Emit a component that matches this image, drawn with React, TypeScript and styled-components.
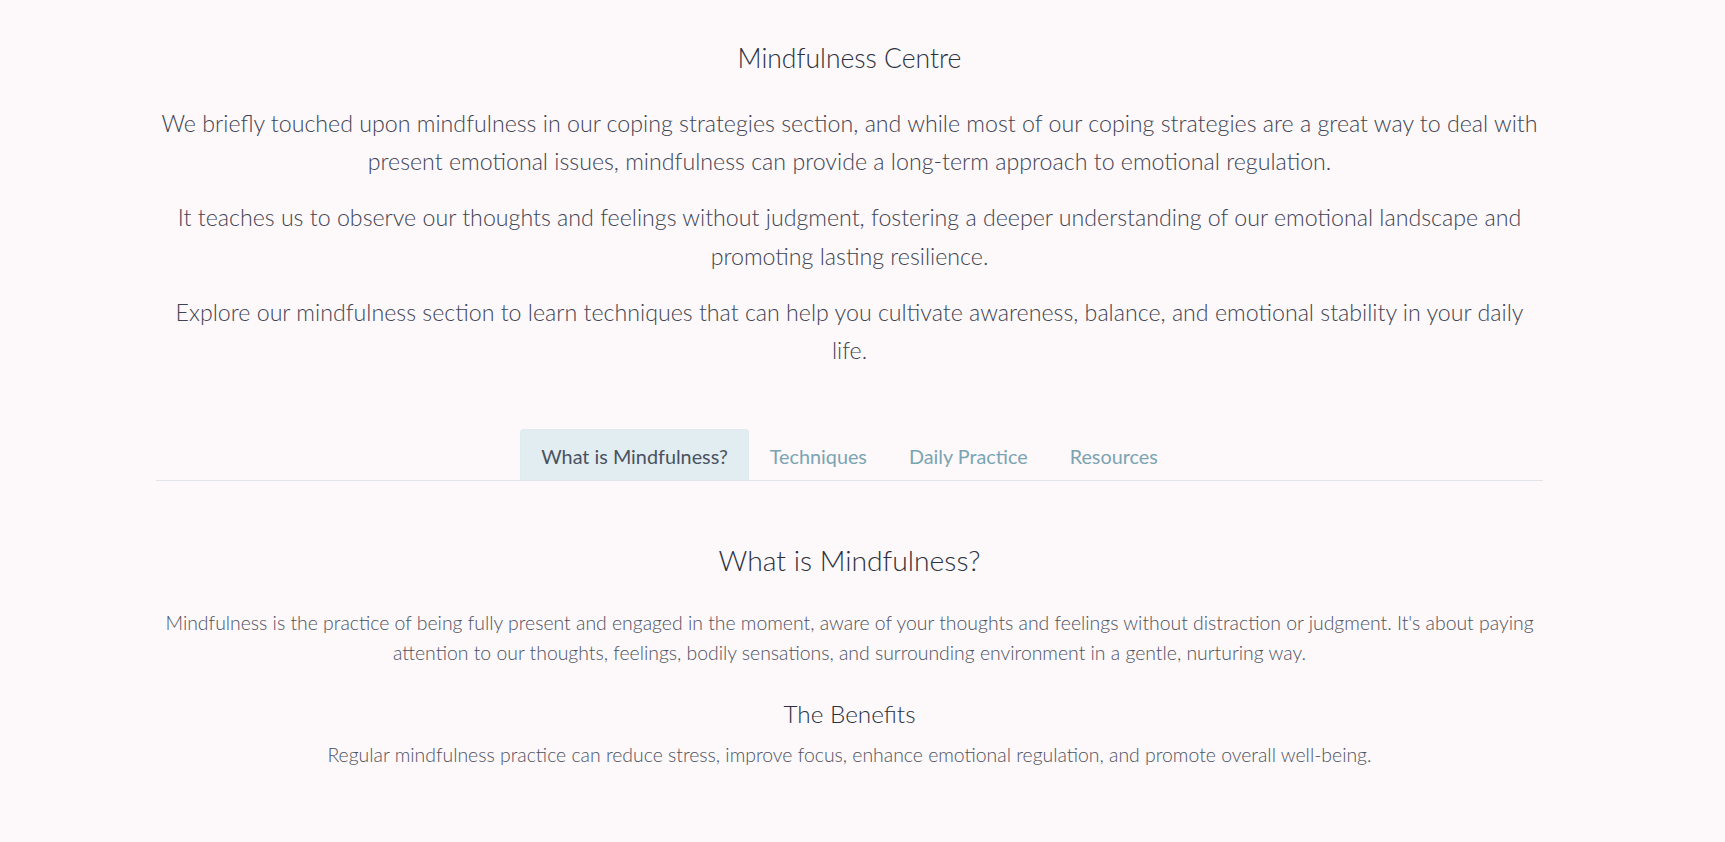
import React, { useState } from "react";
import styled, { createGlobalStyle } from "styled-components";

const GlobalStyle = createGlobalStyle`
  html, body { margin: 0; padding: 0; background: #fdf8fa; }
  body { font-family: Lato, "Open Sans", sans-serif; font-weight: 300; color: #3f4654; }
  * { box-sizing: border-box; }
`;

const Page = styled.main`
  padding: 42px 182px 60px 156px;
  min-height: 842px;
`;

const Title = styled.h1`
  margin: 0 0 30px;
  font-size: 26.5px;
  line-height: 32px;
  font-weight: 300;
  text-align: center;
  color: #2a3240;
`;

const Lead = styled.p`
  margin: 0 0 17.6px;
  font-size: 23.2px;
  line-height: 38.4px;
  text-align: center;
  color: #3e4452;
`;

const TabBar = styled.nav`
  display: flex;
  justify-content: center;
  margin-top: 58px;
  border-bottom: 1px solid #e1e4e8;
`;

const Tab = styled.button<{ $active?: boolean }>`
  appearance: none;
  border: 1px solid ${(p) => (p.$active ? "#e0e9ee" : "transparent")};
  border-bottom: none;
  border-radius: 4px 4px 0 0;
  background: ${(p) => (p.$active ? "#e1edf1" : "transparent")};
  color: ${(p) => (p.$active ? "#4a5260" : "#7ba4b3")};
  font-family: Lato, "Open Sans", sans-serif;
  font-weight: 400;
  font-size: 19.8px;
  height: 51px;
  line-height: 48px;
  padding: 2px 20px 0;
  margin-top: 1px;
  cursor: pointer;
`;

const Panel = styled.section`
  padding-top: 62px;
  text-align: center;
`;

const SectionTitle = styled.h2`
  margin: 0 0 31px;
  font-size: 28.3px;
  line-height: 34px;
  font-weight: 300;
  color: #2a3240;
`;

const SubTitle = styled.h3`
  margin: 31px 0 11px;
  font-size: 24.3px;
  line-height: 30px;
  font-weight: 300;
  color: #2a3240;
`;

const Body = styled.p`
  margin: 0;
  font-size: 19.4px;
  line-height: 30px;
  color: #4c5260;
`;

const tabs = ["What is Mindfulness?", "Techniques", "Daily Practice", "Resources"];

export default function App() {
  const [active, setActive] = useState(0);
  return (
    <Page>
      <GlobalStyle />
      <Title>Mindfulness Centre</Title>
      <Lead>
        We briefly touched upon mindfulness in our coping strategies section, and while most of our coping strategies are a great way to deal with present emotional issues, mindfulness can provide a long-term approach to emotional regulation.
      </Lead>
      <Lead>
        It teaches us to observe our thoughts and feelings without judgment, fostering a deeper understanding of our emotional landscape and promoting lasting resilience.
      </Lead>
      <Lead>
        Explore our mindfulness section to learn techniques that can help you cultivate awareness, balance, and emotional stability in your daily life.
      </Lead>
      <TabBar>
        {tabs.map((t, i) => (
          <Tab key={t} $active={i === active} onClick={() => setActive(i)}>
            {t}
          </Tab>
        ))}
      </TabBar>
      <Panel>
        <SectionTitle>What is Mindfulness?</SectionTitle>
        <Body>
          Mindfulness is the practice of being fully present and engaged in the moment, aware of your thoughts and feelings without distraction or judgment. It's about paying attention to our thoughts, feelings, bodily sensations, and surrounding environment in a gentle, nurturing way.
        </Body>
        <SubTitle>The Benefits</SubTitle>
        <Body>
          Regular mindfulness practice can reduce stress, improve focus, enhance emotional regulation, and promote overall well-being.
        </Body>
      </Panel>
    </Page>
  );
}
